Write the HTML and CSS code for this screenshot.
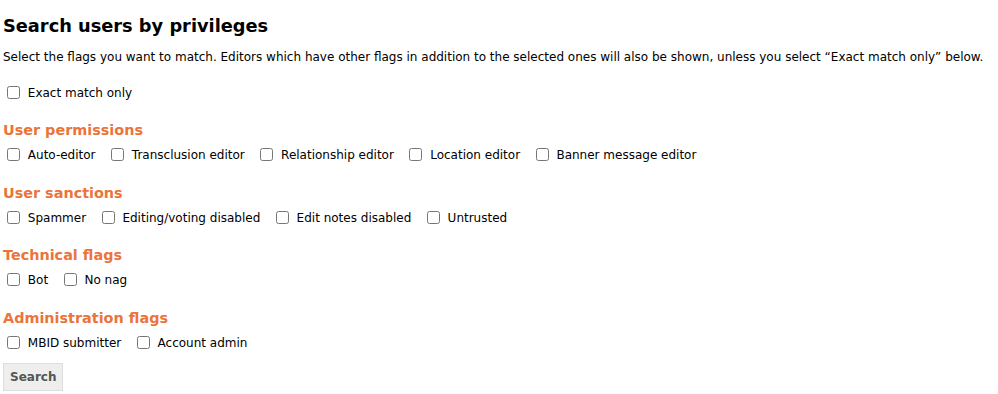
FILE: index.html
```html
<!DOCTYPE html>
<html lang="en">
<head>
    <meta charset="UTF-8">
    <title>Search users by privileges</title>
    <link rel="stylesheet" href="styles.css">
</head>
<body>
    <main class="content">
        <h2>Search users by privileges</h2>
        <p class="intro">Select the flags you want to match. Editors which have other flags in addition to the selected ones will also be shown, unless you select “Exact match only” below.</p>

        <form class="privilege-search">
            <div class="flag-row exact">
                <label><input type="checkbox" name="exact"> Exact match only</label>
            </div>

            <h3>User permissions</h3>
            <div class="flag-row">
                <label><input type="checkbox"> Auto-editor</label>
                <label><input type="checkbox"> Transclusion editor</label>
                <label><input type="checkbox"> Relationship editor</label>
                <label><input type="checkbox"> Location editor</label>
                <label><input type="checkbox"> Banner message editor</label>
            </div>

            <h3>User sanctions</h3>
            <div class="flag-row">
                <label><input type="checkbox"> Spammer</label>
                <label><input type="checkbox"> Editing/voting disabled</label>
                <label><input type="checkbox"> Edit notes disabled</label>
                <label><input type="checkbox"> Untrusted</label>
            </div>

            <h3>Technical flags</h3>
            <div class="flag-row">
                <label><input type="checkbox"> Bot</label>
                <label><input type="checkbox"> No nag</label>
            </div>

            <h3>Administration flags</h3>
            <div class="flag-row">
                <label><input type="checkbox"> MBID submitter</label>
                <label><input type="checkbox"> Account admin</label>
            </div>

            <button type="button" class="search-btn">Search</button>
        </form>
    </main>
</body>
</html>
```

FILE: styles.css
```css
body {
    font-family: 'DejaVu Sans', Verdana, sans-serif;
    font-size: 12px;
    color: #000;
    background: #fff;
    margin: 0;
    padding: 0;
}
.content {
    padding: 0 3px;
}
h2 {
    font-size: 17.8px;
    font-weight: bold;
    margin: 0;
    padding-top: 15px;
    line-height: 22px;
}
.intro {
    margin: 12px 0 0;
    line-height: 16px;
}
h3 {
    color: #eb743b;
    font-size: 14.4px;
    font-weight: bold;
    margin: 0 0 6px;
    line-height: 20px;
}
.flag-row {
    display: flex;
    gap: 11.5px;
    margin: 0 0 18.5px;
    line-height: 18px;
}
.flag-row.exact {
    margin: 19px 0 18px;
}
.flag-row label {
    display: block;
    white-space: nowrap;
}
.flag-row input {
    margin: 0 4px 0 4px;
    width: 13px;
    height: 13px;
    vertical-align: -2px;
}
.search-btn {
    display: block;
    font-family: inherit;
    font-size: 12px;
    font-weight: bold;
    color: #555;
    background: #eee;
    border: 1px solid #ddd;
    padding: 0 6px;
    height: 28px;
    margin: -7px 0 0;
}
```
